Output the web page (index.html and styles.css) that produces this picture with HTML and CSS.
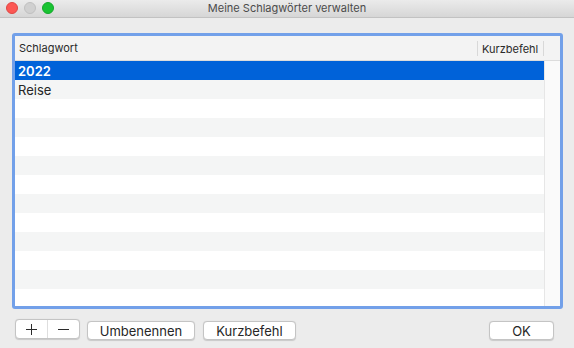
FILE: index.html
```html
<!DOCTYPE html>
<html>
<head>
<meta charset="utf-8">
<link rel="stylesheet" href="styles.css">
</head>
<body>
<div class="window">
  <div class="titlebar">
    <div class="lights">
      <span class="light red"></span>
      <span class="light gray"></span>
      <span class="light green"></span>
    </div>
    <div class="title">Meine Schlagwörter verwalten</div>
  </div>
  <div class="content">
    <div class="frame">
      <div class="table">
        <div class="thead">
          <div class="th col-word">Schlagwort</div>
          <div class="th col-key">Kurzbefehl</div>
          <div class="th col-scroll"></div>
        </div>
        <div class="tbody">
          <div class="rows">
            <div class="row selected"><span class="cell">2022</span></div>
            <div class="row"><span class="cell">Reise</span></div>
            <div class="row"></div>
            <div class="row"></div>
            <div class="row"></div>
            <div class="row"></div>
            <div class="row"></div>
            <div class="row"></div>
            <div class="row"></div>
            <div class="row"></div>
            <div class="row"></div>
            <div class="row"></div>
            <div class="row"></div>
            <div class="row"></div>
          </div>
          <div class="scrolltrack"></div>
        </div>
      </div>
    </div>
    <div class="footer">
      <div class="segmented">
        <span class="seg seg-plus" aria-label="Hinzufügen">
          <svg width="11" height="11" viewBox="0 0 11 11"><path d="M0 5.5H11M5.5 0V11" stroke="#2b2b2b" stroke-width="1"/></svg>
        </span>
        <span class="seg seg-minus" aria-label="Entfernen">
          <svg width="11" height="11" viewBox="0 0 11 11"><path d="M0 5.5H11" stroke="#2b2b2b" stroke-width="1"/></svg>
        </span>
      </div>
      <button class="btn btn-rename">Umbenennen</button>
      <button class="btn btn-key">Kurzbefehl</button>
      <div class="spacer"></div>
      <button class="btn btn-ok">OK</button>
    </div>
  </div>
</div>
</body>
</html>
```
FILE: styles.css
```css
* { box-sizing: border-box; }
html, body { margin: 0; padding: 0; }
body {
  font-family: Inter, "Helvetica Neue", "Liberation Sans", sans-serif;
  color: #262626;
  background: #ececec;
}
.window {
  width: 574px;
  height: 348px;
  background: #ececec;
  display: flex;
  flex-direction: column;
  overflow: hidden;
}
.titlebar {
  height: 18px;
  flex: none;
  display: grid;
  background: linear-gradient(#ebebeb, #d6d6d6);
  border-bottom: 1px solid #c2c2c2;
}
.lights, .title { grid-area: 1 / 1; }
.lights {
  display: flex;
  align-items: center;
  gap: 6px;
  padding-left: 6px;
  padding-bottom: 1px;
}
.light {
  width: 12px;
  height: 12px;
  border-radius: 50%;
  display: block;
}
.red { background: #fc5753; border: 0.5px solid #df4744; }
.gray { background: #d0d0d0; border: 0.5px solid #c0c0c0; }
.green { background: #19c332; border: 0.5px solid #14a82b; }
.title {
  text-align: center;
  font-size: 11px;
  line-height: 17px;
  color: #4b4b4b;
}
.content {
  flex: 1;
  display: flex;
  flex-direction: column;
  padding: 15px 11px 0 12px;
}
.frame {
  width: 551px;
  height: 276px;
  border: 3px solid #72a0e9;
  border-radius: 3px;
  background: #fff;
  overflow: hidden;
}
.table {
  height: 100%;
  display: flex;
  flex-direction: column;
}
.thead {
  height: 25px;
  flex: none;
  display: flex;
  background: #f3f3f3;
  border-bottom: 1px solid #dcdcdc;
  font-size: 11px;
  color: #2a2a2a;
}
.th {
  display: flex;
  align-items: center;
  padding-left: 4px;
}
.col-word { width: 462px; }
.col-key {
  width: 67px;
  border-left: 1px solid #d8d8d8;
  border-right: 1px solid #d8d8d8;
  margin: 5px 0 4px;
}
.col-scroll { flex: 1; }
.tbody {
  flex: 1;
  display: flex;
  overflow: hidden;
}
.rows {
  width: 529px;
  display: flex;
  flex-direction: column;
}
.row {
  height: 19px;
  flex: none;
  display: flex;
  align-items: center;
  padding-left: 3px;
  font-size: 13px;
  color: #262626;
  background: #fff;
}
.row:nth-child(even) { background: #f4f5f5; }
.row.selected {
  background: #0062d9;
  color: #fff;
  font-weight: 600;
}
.scrolltrack {
  flex: 1;
  background: #fafafa;
  border-left: 1px solid #e6e6e6;
}
.footer {
  display: flex;
  align-items: flex-start;
  margin-top: 10px;
  padding-left: 3px;
  padding-right: 9px;
}
.segmented {
  width: 65px;
  height: 20px;
  display: flex;
  background: #fff;
  border: 0.5px solid #c4c4c4;
  border-radius: 4px;
  box-shadow: 0 0.5px 1px rgba(0,0,0,0.15);
}
.seg {
  flex: 1;
  display: flex;
  align-items: center;
  justify-content: center;
}
.seg svg { display: block; }
.seg-plus { border-right: 1px solid #dedede; }
.btn {
  height: 19px;
  margin-top: 2px;
  margin-left: 7px;
  padding: 0;
  font-family: inherit;
  font-size: 13px;
  color: #262626;
  background: #fff;
  border: 0.5px solid #c4c4c4;
  border-radius: 4px;
  box-shadow: 0 0.5px 1px rgba(0,0,0,0.15);
  display: flex;
  align-items: center;
  justify-content: center;
}
.btn-rename { width: 108px; }
.btn-key { width: 93px; margin-left: 8px; }
.btn-ok { width: 65px; }
.spacer { flex: 1; }
```
